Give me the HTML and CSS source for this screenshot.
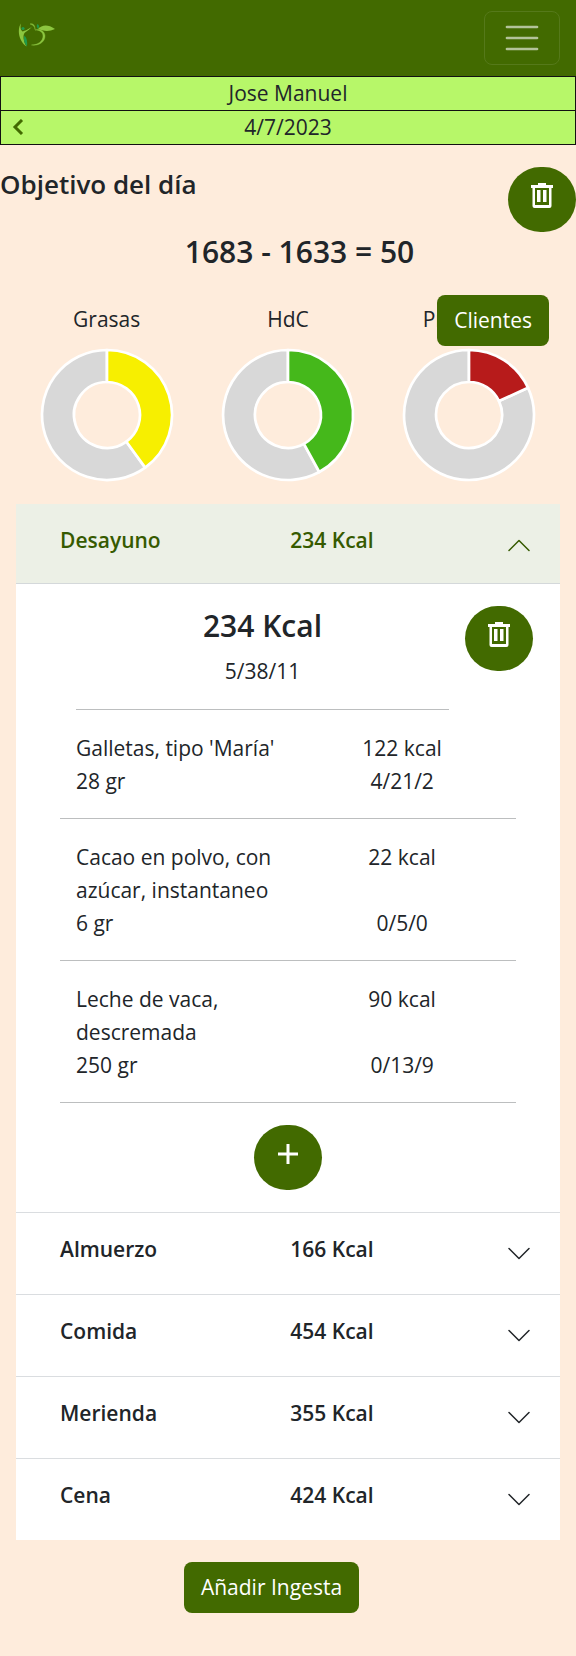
FILE: index.html
```html
<!DOCTYPE html>
<html lang="es">
<head>
<meta charset="utf-8">
<meta name="viewport" content="width=device-width, initial-scale=1">
<title>Objetivo del día</title>
<link rel="stylesheet" href="styles.css">
</head>
<body>
<svg class="sprite" aria-hidden="true">
  <symbol id="trash" viewBox="0 0 24 26">
    <path d="M8 0h8v2h7v3h-1.500v18q0 2-2 2h-15q-2 0-2-2V5H1V2h7zM5 5v17h14V5zM7 7h3.500v12H7zM13 7h3.500v12H13z" fill="currentColor" fill-rule="evenodd"/>
  </symbol>
  <symbol id="chevron" viewBox="0 0 22 22">
    <path d="M1 5.500L11 15.500L21 5.500" fill="none" stroke="currentColor" stroke-width="1.500" stroke-linecap="round" stroke-linejoin="round"/>
  </symbol>
</svg>

<header class="navbar">
  <a class="brand" href="#" aria-label="Inicio">
    <svg class="logo" viewBox="0 0 38 24" aria-hidden="true">
      <path d="M3 .5C-.5 5-.5 17 8.500 23.500C4.500 17 5 11 7 9.500C10 7 12 6.500 14 3.500C10 7 7 7.500 4.500 8.500C2.500 7 2 4 3 .5z" fill="#8cc63f"/>
      <circle cx="5" cy="5.500" r="1.600" fill="#1f9a4c"/>
      <path d="M6.500 12.500C5 16 6 20 9 23.500C9.500 19 9 15 6.500 12.500z" fill="#1f9a4c"/>
      <path d="M12 1C15-.2 17 2 17 6.500C17 3.500 15 2 12 1zM17 7C23 5 27 9 27 13C27 19 21 23 13.500 22C20 22 25 18 25 13C25 9.500 22 7 17 7z" fill="#8cc63f" stroke="#8cc63f" stroke-width=".4"/>
      <path d="M19.500 1C21.500 2 21.500 4 20 6C18.500 4 18.500 2 19.500 1z" fill="#1f9a4c"/>
      <path d="M20 6C24 1.500 30 1 37 6C31 9 25 8 20 6z" fill="#8cc63f"/>
    </svg>
  </a>
  <button class="toggler" type="button" aria-label="Menú">
    <svg class="toggler-icon" viewBox="0 0 40 40" aria-hidden="true">
      <path d="M5 9h30M5 20h30M5 31h30" stroke="currentColor" stroke-width="2.700" stroke-linecap="round"/>
    </svg>
  </button>
</header>

<div class="info">
  <div class="info-row">Jose Manuel</div>
  <div class="info-row">
    <button class="prev" type="button" aria-label="Día anterior">
      <svg class="prev-icon" viewBox="0 0 12 16" aria-hidden="true"><path d="M10 1L3 8l7 7" fill="none" stroke="currentColor" stroke-width="3"/></svg>
    </button>
    4/7/2023
  </div>
</div>

<main>
  <div class="goal">
    <h1 class="goal-title">Objetivo del día</h1>
    <button class="round" type="button" aria-label="Borrar día"><svg class="round-icon" aria-hidden="true"><use href="#trash"/></svg></button>
  </div>
  <p class="balance">1683 - 1633 = 50</p>

  <section class="charts">
    <figure class="chart">
      <figcaption>Grasas</figcaption>
      <svg class="donut" viewBox="-66 -66 132 132" role="img" aria-label="Grasas 40%">
        <path class="rest" d="M38.200 52.600A65 65 0 1 1 0-65V-33A33 33 0 1 0 19.400 26.700z"/>
        <path class="fat" d="M0-65A65 65 0 0 1 38.200 52.600L19.400 26.700A33 33 0 0 0 0-33z"/>
      </svg>
    </figure>
    <figure class="chart">
      <figcaption>HdC</figcaption>
      <svg class="donut" viewBox="-66 -66 132 132" role="img" aria-label="HdC 42%">
        <path class="rest" d="M31.300 57A65 65 0 1 1 0-65V-33A33 33 0 1 0 15.900 28.900z"/>
        <path class="carbs" d="M0-65A65 65 0 0 1 31.300 57L15.900 28.900A33 33 0 0 0 0-33z"/>
      </svg>
    </figure>
    <figure class="chart">
      <figcaption>Proteínas</figcaption>
      <svg class="donut" viewBox="-66 -66 132 132" role="img" aria-label="Proteínas 18%">
        <path class="rest" d="M59-27.300A65 65 0 1 1 0-65V-33A33 33 0 1 0 30-13.900z"/>
        <path class="protein" d="M0-65A65 65 0 0 1 59-27.300L30-13.900A33 33 0 0 0 0-33z"/>
      </svg>
    </figure>
    <button class="btn clients" type="button">Clientes</button>
  </section>

  <section class="meals">
    <article class="meal">
      <h2 class="meal-heading">
        <button class="meal-toggle open" type="button" aria-expanded="true">
          <span>Desayuno</span><span class="meal-kcal">234 Kcal</span>
          <svg class="chevron" aria-hidden="true"><use href="#chevron"/></svg>
        </button>
      </h2>
      <div class="meal-body">
        <div class="summary">
          <div class="summary-text">
            <h3 class="summary-kcal">234 Kcal</h3>
            <p class="summary-macros">5/38/11</p>
          </div>
          <button class="round" type="button" aria-label="Borrar desayuno"><svg class="round-icon" aria-hidden="true"><use href="#trash"/></svg></button>
        </div>
        <ul class="foods">
          <li class="food">
            <span>Galletas, tipo 'María'</span><span class="value">122 kcal</span>
            <span>28 gr</span><span class="value">4/21/2</span>
          </li>
          <li class="food">
            <span>Cacao en polvo, con azúcar, instantaneo</span><span class="value">22 kcal</span>
            <span>6 gr</span><span class="value">0/5/0</span>
          </li>
          <li class="food">
            <span>Leche de vaca, descremada</span><span class="value">90 kcal</span>
            <span>250 gr</span><span class="value">0/13/9</span>
          </li>
        </ul>
        <button class="round add" type="button" aria-label="Añadir alimento">
          <svg class="round-icon" viewBox="0 0 24 26" aria-hidden="true"><path d="M12 3v20M2 13h20" stroke="currentColor" stroke-width="3"/></svg>
        </button>
      </div>
    </article>
    <article class="meal">
      <h2 class="meal-heading">
        <button class="meal-toggle" type="button" aria-expanded="false">
          <span>Almuerzo</span><span class="meal-kcal">166 Kcal</span>
          <svg class="chevron" aria-hidden="true"><use href="#chevron"/></svg>
        </button>
      </h2>
    </article>
    <article class="meal">
      <h2 class="meal-heading">
        <button class="meal-toggle" type="button" aria-expanded="false">
          <span>Comida</span><span class="meal-kcal">454 Kcal</span>
          <svg class="chevron" aria-hidden="true"><use href="#chevron"/></svg>
        </button>
      </h2>
    </article>
    <article class="meal">
      <h2 class="meal-heading">
        <button class="meal-toggle" type="button" aria-expanded="false">
          <span>Merienda</span><span class="meal-kcal">355 Kcal</span>
          <svg class="chevron" aria-hidden="true"><use href="#chevron"/></svg>
        </button>
      </h2>
    </article>
    <article class="meal">
      <h2 class="meal-heading">
        <button class="meal-toggle" type="button" aria-expanded="false">
          <span>Cena</span><span class="meal-kcal">424 Kcal</span>
          <svg class="chevron" aria-hidden="true"><use href="#chevron"/></svg>
        </button>
      </h2>
    </article>
  </section>
  <div class="actions"><button class="btn" type="button">Añadir Ingesta</button></div>
</main>
</body>
</html>
```

FILE: styles.css
```css
* { box-sizing: border-box; }

body {
  margin: 0;
  background: #feecdc;
  color: #212529;
  font: 21px/33px "Segoe UI", "Open Sans", "Noto Sans", sans-serif;
}

h1, h2, h3, p, figure, ul { margin: 0; padding: 0; }

button {
  border: 0;
  padding: 0;
  background: none;
  color: inherit;
  font: inherit;
  cursor: pointer;
}

svg { display: block; }
.sprite { position: absolute; width: 0; height: 0; }

.navbar {
  display: flex;
  justify-content: space-between;
  align-items: center;
  padding: 11px 16px;
  background: #426a00;
}
.brand { padding-bottom: 6px; }
.logo { width: 38px; height: 24px; margin-left: 2px; }
.toggler {
  display: grid;
  place-items: center;
  width: 76px;
  height: 54px;
  border: 1px solid #55791a;
  border-radius: 8px;
  color: #b3c399;
}
.toggler-icon { width: 42px; height: 40px; }

.info {
  border: 1px solid #111;
  background: #b7f769;
  text-align: center;
}
.info-row { position: relative; }
.info-row + .info-row { border-top: 1px solid #111; }
.prev {
  position: absolute;
  left: 11px;
  top: 8px;
  color: #426a00;
}
.prev-icon { width: 12px; height: 16px; }

main { padding-top: 22px; }

.goal {
  display: flex;
  justify-content: space-between;
  align-items: flex-start;
}
.goal-title { font-size: 26px; line-height: 34px; font-weight: 600; }

.round {
  display: flex;
  justify-content: center;
  width: 68px;
  height: 65px;
  padding-top: 16px;
  border-radius: 34px;
  background: #426a00;
  color: #fff;
}
.round-icon { width: 24px; height: 26px; }

.balance {
  padding-left: 23px;
  font-size: 30px;
  line-height: 40px;
  font-weight: 600;
  text-align: center;
}

.charts {
  position: relative;
  display: grid;
  grid-template-columns: repeat(3, 1fr);
  padding: 31px 16px 23px;
}
.chart {
  display: flex;
  flex-direction: column;
  align-items: center;
  gap: 13px;
}
.donut { width: 132px; height: 132px; overflow: visible; }
.donut path { stroke: #fff; stroke-width: 2.700; stroke-linejoin: round; }
.rest { fill: #d8d8d8; }
.fat { fill: #f7ef00; }
.carbs { fill: #45b81b; }
.protein { fill: #b71b1b; }

.btn {
  padding: 9px 17px;
  border-radius: 8px;
  background: #426a00;
  color: #fff;
}
.clients { position: absolute; top: 23px; right: 27px; }

.meals { margin: 0 16px; background: #fff; }
.meal + .meal { border-top: 1px solid #dadde0; }
.meal-heading { font: inherit; }
.meal-toggle {
  display: grid;
  grid-template-columns: 5fr 4fr 3fr;
  align-items: start;
  width: 100%;
  padding: 20px 29px 28px 44px;
  font-weight: 600;
  text-align: left;
}
.meal-toggle.open {
  padding-bottom: 26px;
  background: #ecf0e6;
  border-bottom: 1px solid #d4d8da;
  color: #365a00;
}
.meal-kcal { padding-left: 34px; }
.chevron { width: 24px; height: 22px; margin: 10px 0 0; justify-self: end; }
.open .chevron { transform: rotate(180deg); }

.meal-body { padding: 22px; }
.summary {
  display: flex;
  align-items: flex-start;
  gap: 16px;
  padding: 0 5px 0 38px;
}
.summary-text {
  flex: 1;
  border-bottom: 1px solid #bcbebf;
  padding-bottom: 21px;
  text-align: center;
}
.summary-kcal { font-size: 30px; line-height: 40px; font-weight: 600; }
.summary-macros { padding-top: 9px; }

.foods { margin: 0 22px; list-style: none; }
.food {
  display: grid;
  grid-template-columns: 7fr 6fr;
  padding: 22px 16px 20px;
  border-bottom: 1px solid #bcbebf;
}
.value { text-align: center; }
.add { margin: 22px auto 0; }

.actions {
  display: flex;
  justify-content: center;
  padding: 22px 33px 44px 0;
}
```
